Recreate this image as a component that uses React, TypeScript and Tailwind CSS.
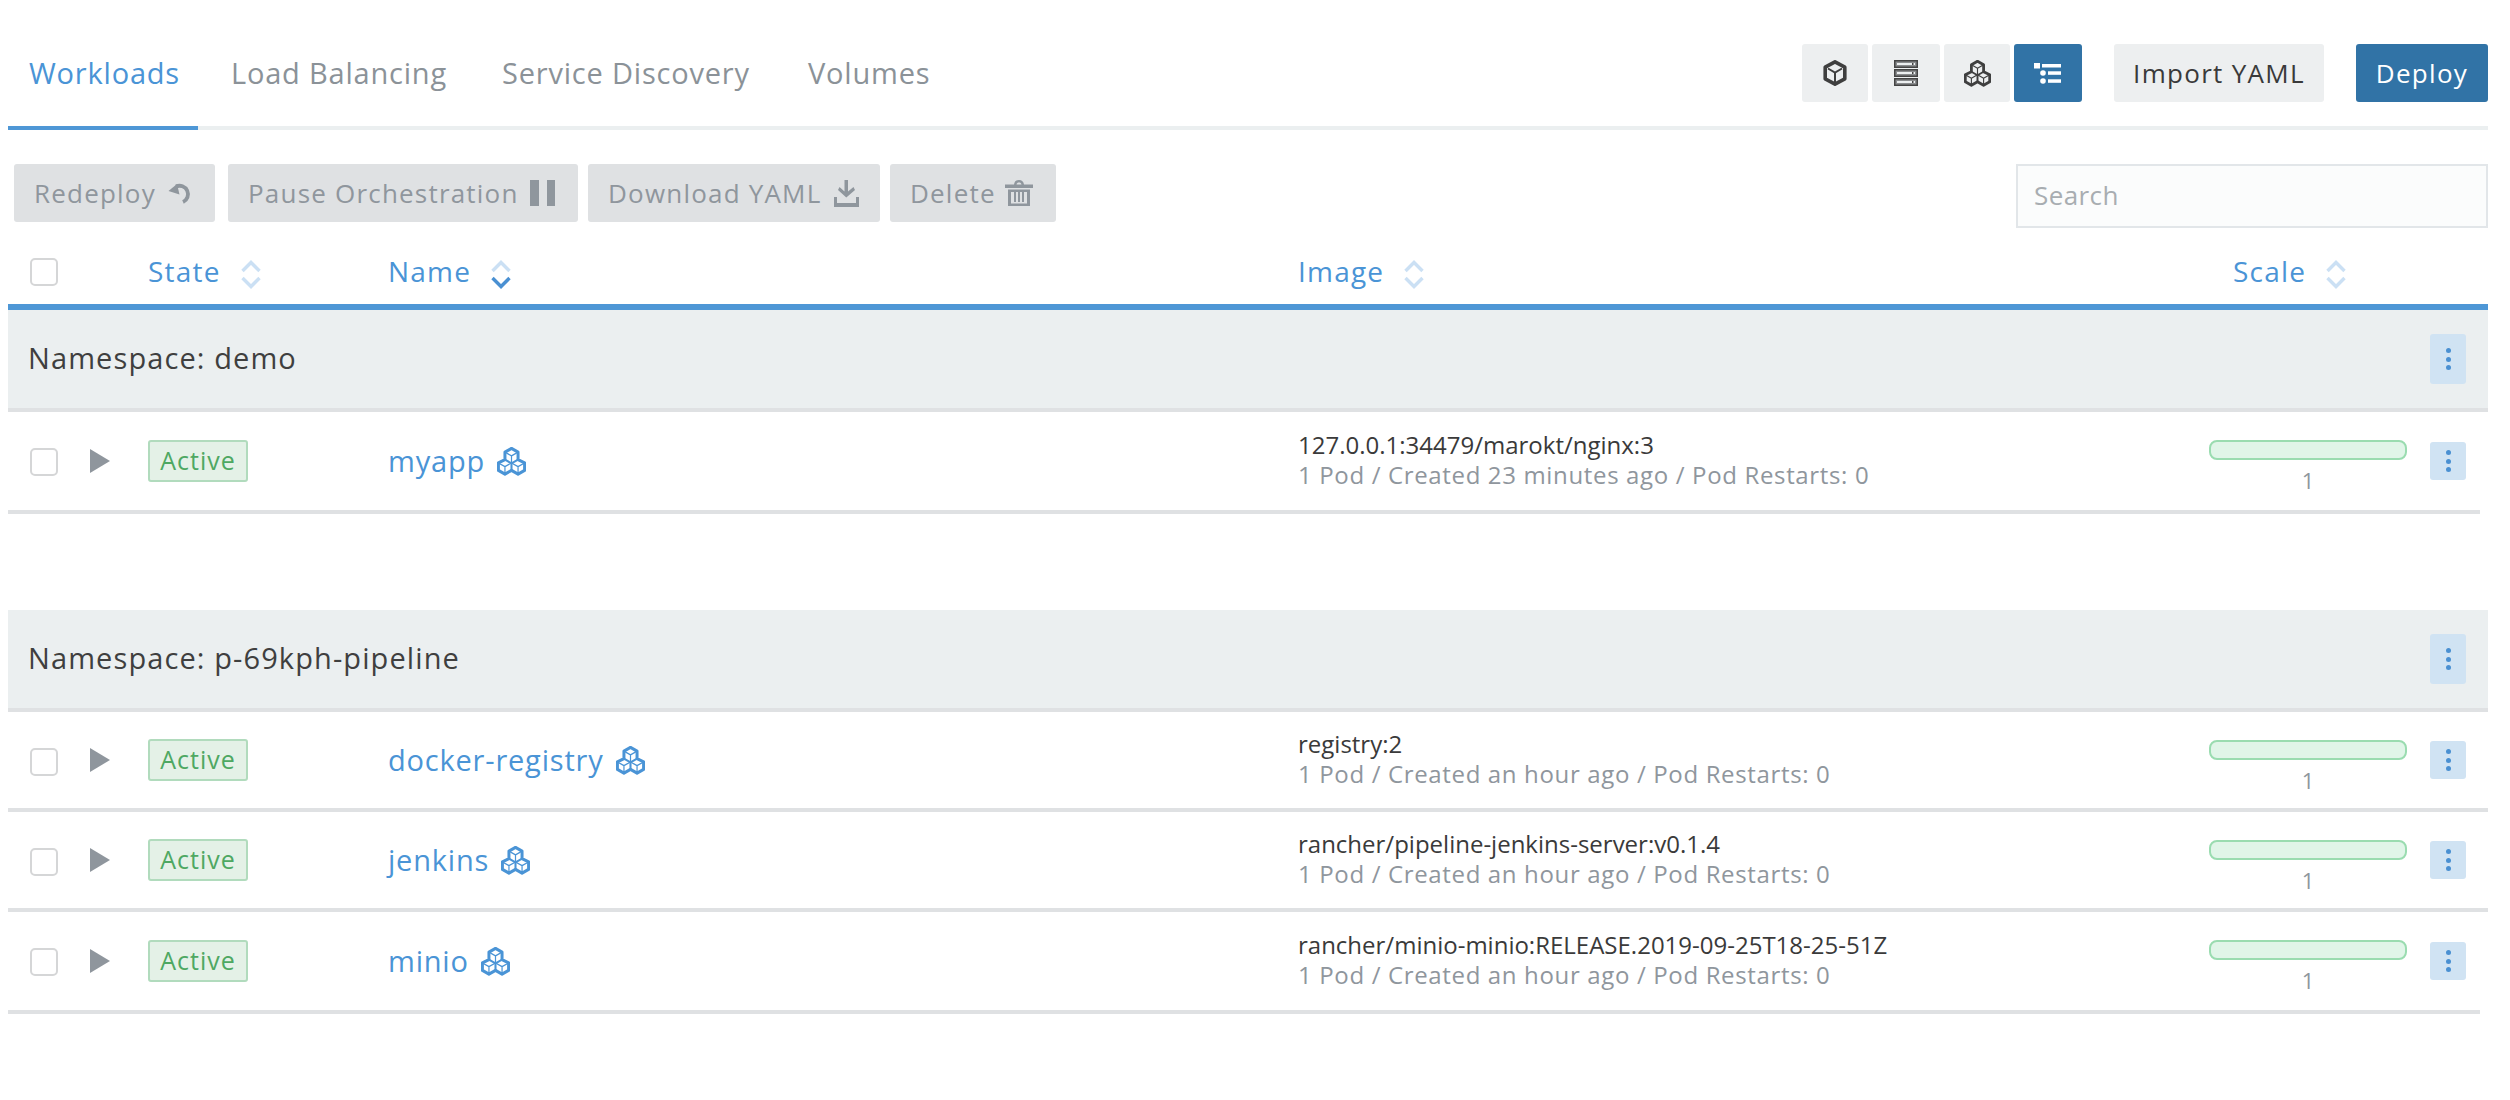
const tabs = [
  { label: 'Workloads', active: true, width: 'w-[190px] pl-[21px]' },
  { label: 'Load Balancing', width: 'ml-[33px] w-[271px]' },
  { label: 'Service Discovery', width: 'w-[306px]' },
  { label: 'Volumes', width: 'w-[130px]' },
];

const groups = [
  {
    namespace: 'demo',
    rows: [
      { name: 'myapp', image: '127.0.0.1:34479/marokt/nginx:3', meta: '1 Pod / Created 23 minutes ago / Pod Restarts: 0', height: 'h-[98px]' },
    ],
  },
  {
    namespace: 'p-69kph-pipeline',
    rows: [
      { name: 'docker-registry', image: 'registry:2', meta: '1 Pod / Created an hour ago / Pod Restarts: 0', height: 'h-[96px]' },
      { name: 'jenkins', image: 'rancher/pipeline-jenkins-server:v0.1.4', meta: '1 Pod / Created an hour ago / Pod Restarts: 0', height: 'h-[96px]' },
      { name: 'minio', image: 'rancher/minio-minio:RELEASE.2019-09-25T18-25-51Z', meta: '1 Pod / Created an hour ago / Pod Restarts: 0', height: 'h-[98px]' },
    ],
  },
];

const columns = 'grid grid-cols-[70px_70px_241px_909px_911px_198px_59px]';

const hexes = [
  { x: 14.5, y: 8.5 },
  { x: 7.5, y: 20 },
  { x: 21.5, y: 20 },
];

const CubeIcon = ({ className }: { className: string }) => (
  <svg viewBox="0 0 24 26" className={className} fill="none" stroke="currentColor">
    <path d="M12 1.8 21.8 7.2V18.8L12 24.2 2.2 18.8V7.2Z" strokeWidth="3.6" strokeLinejoin="round" />
    <path d="M5 8.5 12 12.5 19 8.5M12 12.5V22" strokeWidth="2" />
  </svg>
);

const CubesIcon = ({ className }: { className: string }) => (
  <svg viewBox="-1 -1 31 31" className={className} fill="none" stroke="currentColor" strokeLinejoin="round">
    <path d="M14.5 0.500 21.500 4.500V12.500L28.500 16V24L21.500 28 14.500 24 7.500 28 0.500 24V16L7.500 12.500V4.500Z" strokeWidth="3.2" />
    {hexes.map((h) => (
      <path
        key={h.x + h.y}
        d={`M${h.x - 7} ${h.y - 4}L${h.x} ${h.y}L${h.x + 7} ${h.y - 4}M${h.x} ${h.y}V${h.y + 8}`}
        strokeWidth="1.3"
      />
    ))}
    <path d="M14.5 16.500V24M7.500 12.500 14.500 16.500 21.500 12.500" strokeWidth="2.2" />
  </svg>
);

const ServerIcon = () => (
  <svg viewBox="0 0 24 26" className="w-[24px] h-[26px]" fill="none" stroke="#444">
    {[1, 10, 19].map((y) => (
      <g key={y}>
        <rect x="0.75" y={y - 0.25} width="22.5" height="6.5" strokeWidth="1.5" fill="#8a8c8e" />
        <rect x="3" y={y + 2} width="18" height="2" fill="#eceff0" stroke="none" />
        <rect x="18" y={y + 2} width="1.5" height="2" fill="#444" stroke="none" />
      </g>
    ))}
  </svg>
);

const ListIcon = () => (
  <svg viewBox="0 0 28 22" className="w-[28px] h-[22px]" fill="white">
    <rect x="0" y="1" width="6" height="5.5" />
    <rect x="8" y="2" width="19" height="3.5" />
    <circle cx="9" cy="11" r="2.8" />
    <rect x="14" y="9.3" width="13" height="3.5" />
    <circle cx="9" cy="19" r="2.8" />
    <rect x="14" y="17.3" width="13" height="3.5" />
  </svg>
);

const UndoIcon = () => (
  <svg viewBox="0 0 26 22" className="w-[26px] h-[22px] text-[#8f969d]" fill="none" stroke="currentColor">
    <path d="M8 4.500A8.500 8.500 0 1 1 15 20" strokeWidth="3.8" />
    <path d="M0.500 9 9 2 11.500 12.500Z" fill="currentColor" stroke="none" />
  </svg>
);

const PauseIcon = () => (
  <svg viewBox="0 0 25 26" className="w-[25px] h-[26px] text-[#8f969d]" fill="currentColor">
    <rect x="0" y="0" width="9" height="26" />
    <rect x="17" y="0" width="8" height="26" />
  </svg>
);

const DownloadIcon = () => (
  <svg viewBox="0 0 25 27" className="w-[25px] h-[27px] text-[#8f969d]" fill="currentColor">
    <path d="M10.500 0H14V11.500L19.500 7 21 10 12.300 17.500 4 10 5.500 7 10.500 11.500Z" />
    <path d="M0 17H3V23H22V17H25V27H0Z" />
  </svg>
);

const TrashIcon = () => (
  <svg viewBox="0 0 28 26" className="w-[28px] h-[26px] text-[#8f969d]" fill="currentColor">
    <path d="M0 4.500H9C9.500 1.500 11 0 14 0S18.500 1.500 19 4.500H28V8H0ZM11.500 4.500H16.500C16 3 15.500 2.500 14 2.500S12 3 11.500 4.500Z" />
    <path d="M3 9.500H25V26H3ZM6 12V23.500H22V12Z" />
    <rect x="9" y="12" width="2" height="10" />
    <rect x="13" y="12" width="2" height="10" />
    <rect x="17" y="12" width="2" height="10" />
  </svg>
);

const SortIcon = ({ active }: { active?: boolean }) => (
  <svg viewBox="0 0 20 29" className="w-[20px] h-[29px]" fill="none" strokeWidth="3.4">
    <path d="M1.500 11 10 2.500 18.500 11" stroke="#cbe0f4" />
    <path d="M1.500 18 10 26.500 18.500 18" stroke={active ? '#4a90d2' : '#cbe0f4'} />
  </svg>
);

const Kebab = ({ className }: { className: string }) => (
  <div className={`flex w-[36px] flex-col items-center justify-center gap-[3.5px] rounded-[3px] bg-[#d0e3f3] ${className}`}>
    <span className="h-[5px] w-[5px] rounded-full bg-[#4a90d2]" />
    <span className="h-[5px] w-[5px] rounded-full bg-[#4a90d2]" />
    <span className="h-[5px] w-[5px] rounded-full bg-[#4a90d2]" />
  </div>
);

const Checkbox = () => (
  <div className="h-[28px] w-[28px] rounded-[5px] border-2 border-[#d5d6d7] bg-white" />
);

const Header = ({ label, active, className = '' }: { label: string; active?: boolean; className?: string }) => (
  <div className={`flex items-center gap-[20px] text-[28px] tracking-[1.2px] text-[#4a94d6] ${className}`}>
    <span className="-translate-y-[3px] leading-[29px]">{label}</span>
    <SortIcon active={active} />
  </div>
);

export default function App() {
  return (
    <div className="min-h-screen bg-white pl-[8px] pr-[22px] font-['Open_Sans',sans-serif] font-normal">
      <div className="flex h-[130px] justify-between border-b-4 border-[#ebeff0]">
        <nav className="flex h-[130px] text-[29px] tracking-[0.8px]">
          {tabs.map((tab) => (
            <div
              key={tab.label}
              className={`h-[130px] pt-[51px] ${tab.width} ${
                tab.active ? 'border-b-4 border-[#4e97d6] text-[#4a94d6]' : 'text-[#8b9298]'
              }`}
            >
              {tab.label}
            </div>
          ))}
        </nav>
        <div className="flex items-start pt-[44px] text-[26px] tracking-[1.3px]">
          <div className="flex h-[58px] w-[66px] items-center justify-center rounded-[3px] bg-[#edeff0] text-[#3f3f3f]">
            <CubeIcon className="w-[24px] h-[26px]" />
          </div>
          <div className="ml-[4px] flex h-[58px] w-[68px] items-center justify-center rounded-[3px] bg-[#edeff0]">
            <ServerIcon />
          </div>
          <div className="ml-[4px] flex h-[58px] w-[66px] items-center justify-center rounded-[3px] bg-[#edeff0] text-[#3f3f3f]">
            <CubesIcon className="w-[27px] h-[27px]" />
          </div>
          <div className="ml-[4px] flex h-[58px] w-[68px] items-center justify-center rounded-[3px] bg-[#3173a6]">
            <ListIcon />
          </div>
          <div className="ml-[32px] flex h-[58px] w-[210px] items-center justify-center rounded-[3px] bg-[#edeff0] text-[#3a3a3a]">
            Import YAML
          </div>
          <div className="ml-[32px] flex h-[58px] w-[132px] items-center justify-center rounded-[3px] bg-[#3173a6] text-white">
            Deploy
          </div>
        </div>
      </div>

      <div className="flex h-[130px] items-start justify-between pt-[34px]">
        <div className="ml-[6px] flex text-[26px] tracking-[1.2px] text-[#8f969d]">
          <button className="flex h-[58px] w-[201px] items-center gap-[12px] rounded-[3px] bg-[#dfe1e3] pl-[20px]">
            Redeploy <UndoIcon />
          </button>
          <button className="ml-[13px] flex h-[58px] w-[350px] items-center gap-[11px] rounded-[3px] bg-[#dfe1e3] pl-[20px]">
            Pause Orchestration <PauseIcon />
          </button>
          <button className="ml-[10px] flex h-[58px] w-[292px] items-center gap-[13px] rounded-[3px] bg-[#dfe1e3] pl-[20px]">
            Download YAML <DownloadIcon />
          </button>
          <button className="ml-[10px] flex h-[58px] w-[166px] items-center gap-[9px] rounded-[3px] bg-[#dfe1e3] pl-[20px]">
            Delete <TrashIcon />
          </button>
        </div>
        <input
          placeholder="Search"
          className="h-[64px] w-[472px] border-2 border-[#e2e6e9] bg-[#fbfcfc] pb-[2px] pl-[16px] text-[26px] tracking-[0.4px] outline-none placeholder:text-[#a8adb1]"
        />
      </div>

      <div className={`${columns} box-content h-[44px] items-start border-b-[6px] border-[#4e97d6]`}>
        <div className="-mt-[2px] pl-[22px]">
          <Checkbox />
        </div>
        <div />
        <Header label="State" />
        <Header label="Name" active className="-ml-[1px]" />
        <Header label="Image" />
        <div className="col-span-2">
          <Header label="Scale" className="pl-[24px]" />
        </div>
      </div>

      {groups.map((group) => (
        <section key={group.namespace} className="mb-[96px]">
          <div className="flex h-[102px] items-center justify-between border-b-4 border-[#dfe1e3] bg-[#ebeff0] pl-[20px] pr-[22px] text-[29px] tracking-[1.1px] text-[#3f3f3f]">
            <span className="pb-[3px]">Namespace: {group.namespace}</span>
            <Kebab className="h-[50px]" />
          </div>
          {group.rows.map((row) => (
            <div key={row.name} className={`${columns} ${row.height} box-content items-center border-b-4 border-[#dfe1e3] last:mr-[8px]`}>
              <div className="self-start pl-[22px] pt-[36px]">
                <Checkbox />
              </div>
              <div className="pl-[12px]">
                <div className="h-0 w-0 border-y-[12.500px] border-l-[20px] border-y-transparent border-l-[#8f969d]" />
              </div>
              <div>
                <div className="flex h-[42px] w-[100px] items-center justify-center rounded-[3px] border-2 border-[#b1dbbd] bg-[#e4f1e7] text-[25px] tracking-[1px] text-[#4ea862]">
                  Active
                </div>
              </div>
              <div className="-ml-[1px] flex items-center gap-[12px] text-[29px] tracking-[0.8px] text-[#4a94d6]">
                <span>{row.name}</span>
                <CubesIcon className="w-[29px] h-[29px]" />
              </div>
              <div className="pb-[2px] leading-[30px]">
                <div className="text-[24px] tracking-[0] text-[#3a3a3a]">{row.image}</div>
                <div className="text-[24px] tracking-[0.65px] text-[#8f969d]">{row.meta}</div>
              </div>
              <div className="self-start pt-[28px]">
                <div className="h-[20px] w-[198px] rounded-[8px] border-2 border-[#9adcb0] bg-[#e0f5e8]" />
                <div className="mt-[6px] text-center text-[22px] leading-[28px] text-[#8f969d]">1</div>
              </div>
              <div className="pl-[23px]">
                <Kebab className="h-[38px]" />
              </div>
            </div>
          ))}
        </section>
      ))}
    </div>
  );
}
